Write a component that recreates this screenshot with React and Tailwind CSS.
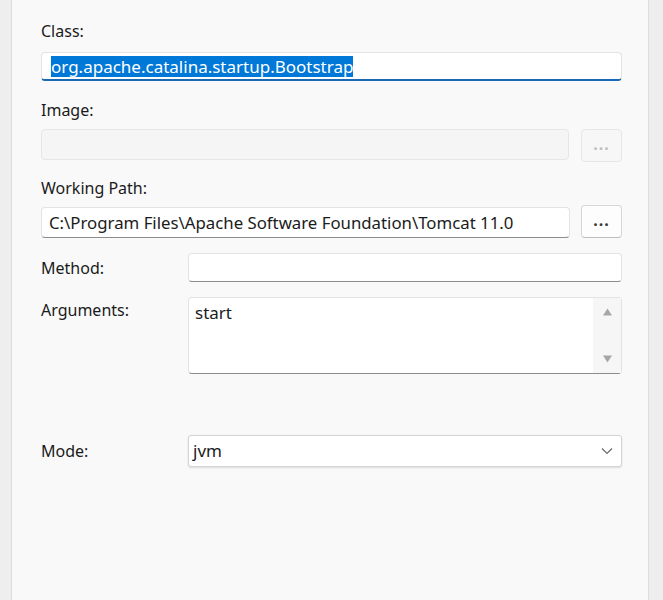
import React from 'react';

function DotsButton({ disabled }) {
  return (
    <button
      className={`flex h-[33px] w-[41px] shrink-0 items-center justify-center rounded-[4px] border pb-[3px] text-[16px] font-bold tracking-[1px] ${
        disabled
          ? 'border-[#e6e6e6] bg-[#f7f7f7] text-[#c0c0c0]'
          : 'border-[#d6d6d6] border-b-[#bdbdbd] bg-[#fdfdfd] text-[#3a3a3a]'
      }`}
    >
      ...
    </button>
  );
}

function ChevronDown({ className }) {
  return (
    <svg viewBox="0 0 16 16" fill="none" stroke="currentColor" strokeWidth="1.2" className={className}>
      <path d="M3 5.5l5 5 5-5" />
    </svg>
  );
}

export default function App() {
  return (
    <div
      className="flex h-[600px] bg-[#eeeeee] pl-[11px] pr-[14px] text-[16px] text-[#1b1b1b]"
      style={{ fontFamily: '"Noto Sans", "Open Sans", sans-serif' }}
    >
      <div className="flex flex-1 flex-col border-x border-[#dddddd] bg-[#f9f9f9] pl-[29px] pr-[26px] pt-[21px]">
        <div className="h-[20px] leading-[20px]">Class:</div>
        <div className="mt-[11px] flex h-[29px] items-center rounded-[4px] border border-[#e3e3e3] border-b-2 border-b-[#1a69b5] bg-white pl-[9px] text-[17px]">
          <span className="bg-[#0078d7] leading-[21px] text-white">org.apache.catalina.startup.Bootstrap</span>
        </div>

        <div className="mt-[19px] h-[20px] leading-[20px]">Image:</div>
        <div className="mt-[9px] flex items-start gap-[12px]">
          <div className="h-[31px] flex-1 rounded-[4px] border border-[#e6e6e6] bg-[#f5f5f5]" />
          <DotsButton disabled />
        </div>

        <div className="mt-[16px] h-[20px] leading-[20px]">Working Path:</div>
        <div className="mt-[7px] flex items-end gap-[11px]">
          <div className="flex h-[31px] flex-1 items-center rounded-[4px] border border-[#e3e3e3] border-b-[#8c8c8c] bg-white pl-[7px] text-[16.8px]">
            C:\Program Files\Apache Software Foundation\Tomcat 11.0
          </div>
          <DotsButton />
        </div>

        <div className="mt-[15px] flex items-center">
          <div className="w-[147px] shrink-0">Method:</div>
          <div className="h-[29px] flex-1 rounded-[4px] border border-[#e3e3e3] border-b-[#8c8c8c] bg-white" />
        </div>

        <div className="mt-[15px] flex items-start">
          <div className="mt-[3px] w-[147px] shrink-0 leading-[20px]">Arguments:</div>
          <div className="flex h-[77px] flex-1 rounded-[4px] border border-[#e3e3e3] border-b-[#8c8c8c] bg-white">
            <div className="flex-1 pl-[6px] pt-[2px] text-[17px]">start</div>
            <div className="flex w-[28px] flex-col items-center justify-between bg-[#f6f6f6] py-[10px]">
              <svg viewBox="0 0 10 8" className="h-[8px] w-[11px] fill-[#a6a6a6]">
                <path d="M5 0.5L9.5 7.5H0.5z" />
              </svg>
              <svg viewBox="0 0 10 8" className="h-[8px] w-[11px] fill-[#a6a6a6]">
                <path d="M0.5 0.5H9.5L5 7.5z" />
              </svg>
            </div>
          </div>
        </div>

        <div className="mt-[61px] flex items-center">
          <div className="w-[147px] shrink-0">Mode:</div>
          <div className="flex h-[32px] flex-1 items-center justify-between rounded-[3px] border border-[#d4d4d4] bg-white pl-[4px] pr-[6px] text-[17px] shadow-[0_1px_2px_rgba(0,0,0,0.12)]">
            <span>jvm</span>
            <ChevronDown className="h-[16px] w-[16px] text-[#6b6b6b]" />
          </div>
        </div>
      </div>
    </div>
  );
}
